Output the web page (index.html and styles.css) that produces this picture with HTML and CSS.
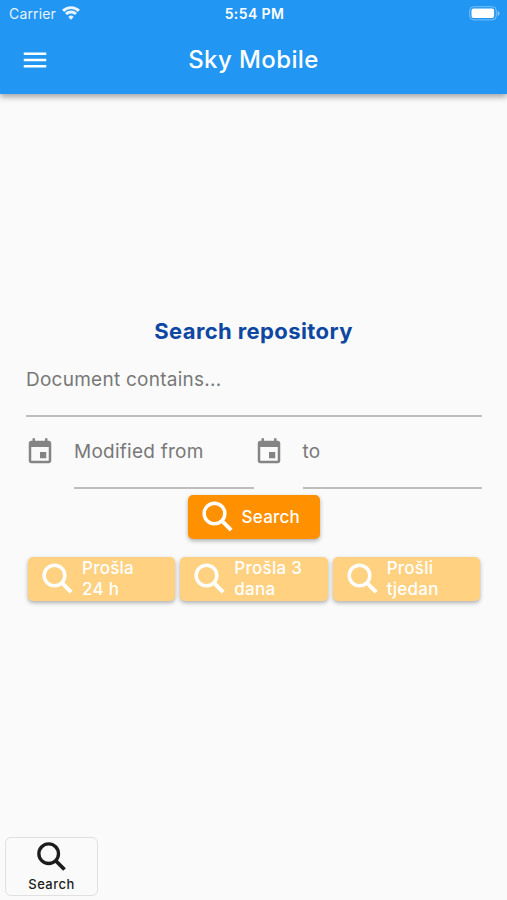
FILE: index.html
```html
<!DOCTYPE html>
<html lang="en">
<head>
    <meta charset="UTF-8">
    <meta name="viewport" content="width=device-width, initial-scale=1.0">
    <title>Sky Mobile</title>
    <link rel="stylesheet" href="styles.css">
</head>
<body>
    <svg class="symbols">
        <symbol id="search" viewBox="0 0 24 24">
            <g fill="none" stroke="currentColor" stroke-width="2.1">
                <circle cx="9.9" cy="9.9" r="6.2"/>
                <path d="M14.2 14.2l5.7 5.7" stroke-width="2.4"/>
            </g>
        </symbol>
        <symbol id="event" viewBox="0 0 24 24">
            <path d="M17 12h-5v5h5v-5zM16 1v2H8V1H6v2H5c-1.11 0-1.99.9-1.99 2L3 19c0 1.1.89 2 2 2h14c1.1 0 2-.9 2-2V5c0-1.1-.9-2-2-2h-1V1h-2zm3 18H5V8h14v11z"/>
        </symbol>
    </svg>
    <header class="header">
        <div class="status">
            <div class="carrier">
                <span>Carrier</span>
                <svg class="wifi" viewBox="0 0 18 14">
                    <path d="M1.1 4.9a11.2 11.2 0 0 1 15.8 0" />
                    <path d="M4 8a7.1 7.1 0 0 1 10 0" />
                    <path class="dot" d="M9 13.8l2.7-2.9a3.8 3.8 0 0 0-5.4 0z" />
                </svg>
            </div>
            <div class="time">5:54 PM</div>
            <div class="battery">
                <svg width="31" height="15" viewBox="0 0 31 15">
                    <rect class="case" x="0.7" y="0.7" width="26.6" height="13.2" rx="4"/>
                    <rect class="level" x="2.5" y="2.6" width="22.6" height="9.4" rx="2"/>
                    <path class="tip" d="M28.7 5v5c1.1-.4 1.8-1.4 1.8-2.5S29.8 5.4 28.7 5z"/>
                </svg>
            </div>
        </div>
        <div class="toolbar">
            <a href="#" class="menu">
                <svg viewBox="0 0 24 24"><path d="M3 18h18v-2H3v2zm0-5h18v-2H3v2zm0-7v2h18V6H3z"/></svg>
            </a>
            <h1>Sky Mobile</h1>
        </div>
    </header>
    <main class="container">
        <h2>Search repository</h2>
        <div class="field contains"><span>Document contains...</span></div>
        <div class="dates">
            <div class="date">
                <svg class="event"><use href="#event"/></svg>
                <div class="field"><span>Modified from</span></div>
            </div>
            <div class="date">
                <svg class="event"><use href="#event"/></svg>
                <div class="field"><span>to</span></div>
            </div>
        </div>
        <button class="btn search-btn">
            <svg><use href="#search"/></svg>
            <span>Search</span>
        </button>
        <div class="quick">
            <button class="btn"><svg><use href="#search"/></svg><span>Prošla<br>24 h</span></button>
            <button class="btn"><svg><use href="#search"/></svg><span>Prošla 3<br>dana</span></button>
            <button class="btn"><svg><use href="#search"/></svg><span>Prošli<br>tjedan</span></button>
        </div>
    </main>
    <footer class="footer">
        <a href="#" class="tab">
            <svg><use href="#search"/></svg>
            <span>Search</span>
        </a>
    </footer>
</body>
</html>
```
FILE: styles.css
```css
* {
  box-sizing: border-box;
}

body {
  font-family: Inter, "Liberation Sans", sans-serif;
  background-color: #fafafa;
  margin: 0;
  height: 900px;
  display: flex;
  flex-direction: column;
  overflow: hidden;
}

.symbols {
  display: none;
}

svg {
  fill: currentColor;
  flex: none;
}

.header {
  height: 94px;
  background-color: #2196f3;
  color: #fff;
  box-shadow: 0 3px 6px rgba(0, 0, 0, 0.35);
}

.status {
  display: grid;
  grid-template-columns: 1fr auto 1fr;
  align-items: center;
  height: 27px;
  padding: 0 7px 0 9px;
}

.carrier {
  display: flex;
  align-items: center;
  gap: 6px;
  font-size: 14px;
  letter-spacing: 0.15px;
  opacity: 0.9;
}

.wifi {
  width: 18px;
  height: 14px;
  margin-top: -2px;
  fill: none;
  stroke: #fff;
  stroke-width: 2.9;
}

.wifi .dot {
  fill: #fff;
  stroke: none;
}

.time {
  font-size: 14px;
  font-weight: 600;
  letter-spacing: 0.4px;
}

.battery {
  display: flex;
  justify-content: flex-end;
}

.case {
  fill: none;
  stroke: #fff;
  stroke-opacity: 0.4;
}

.tip {
  fill-opacity: 0.5;
}

.toolbar {
  display: grid;
  grid-template-columns: 50px 1fr 50px;
  align-items: center;
  height: 66px;
}

.menu {
  color: #fff;
  padding-left: 20px;
  height: 30px;
}

.menu svg {
  width: 30px;
  height: 30px;
}

h1 {
  margin: 0 0 1px;
  font-size: 24px;
  font-weight: 450;
  letter-spacing: 0.4px;
  text-align: center;
}

.container {
  flex: 1;
  padding: 223px 25px 0;
}

h2 {
  margin: 0;
  font-size: 22px;
  line-height: 28px;
  font-weight: 650;
  letter-spacing: 0.4px;
  text-align: center;
  color: #0d47a1;
}

.field {
  flex: 1;
  height: 61px;
  padding-top: 12px;
  border-bottom: 2px solid #bebebe;
  font-size: 19px;
  line-height: 24px;
  letter-spacing: 0.25px;
  color: #787878;
}

.contains {
  height: 72px;
  padding-top: 23px;
  margin: 0 0 0 1px;
}

.dates {
  display: flex;
  height: 72px;
  padding-top: 11px;
}

.date {
  flex: 1;
  display: flex;
}

.event {
  width: 30px;
  height: 30px;
  margin: 9px 19px 0 0;
  color: #848484;
}

.btn {
  display: flex;
  align-items: center;
  height: 44px;
  padding: 0 0 0 10px;
  gap: 4px;
  border: none;
  border-radius: 5px;
  background-color: #ff9100;
  color: #fff;
  font-family: inherit;
  font-size: 17px;
  font-weight: 500;
  line-height: 21px;
  letter-spacing: 0.25px;
  text-align: left;
  cursor: pointer;
  box-shadow: 0 2px 4px rgba(0, 0, 0, 0.3);
}

.btn svg {
  width: 40px;
  height: 40px;
}

.search-btn {
  width: 132px;
  margin: 6px auto 0;
}

.quick {
  display: flex;
  gap: 5px;
  padding: 18px 2px 0 3px;
}

.quick .btn {
  flex: 1;
  background-color: #ffd180;
}

.footer {
  padding: 0 5px 4px;
}

.tab {
  display: flex;
  flex-direction: column;
  align-items: center;
  width: 93px;
  height: 59px;
  border: 1.5px solid #e0e0e0;
  border-radius: 6px;
  color: #1c1c1c;
  text-decoration: none;
  font-size: 13px;
  font-weight: 500;
  line-height: 16px;
  letter-spacing: 0.45px;
}

.tab svg {
  width: 40px;
  height: 38px;
}
```
